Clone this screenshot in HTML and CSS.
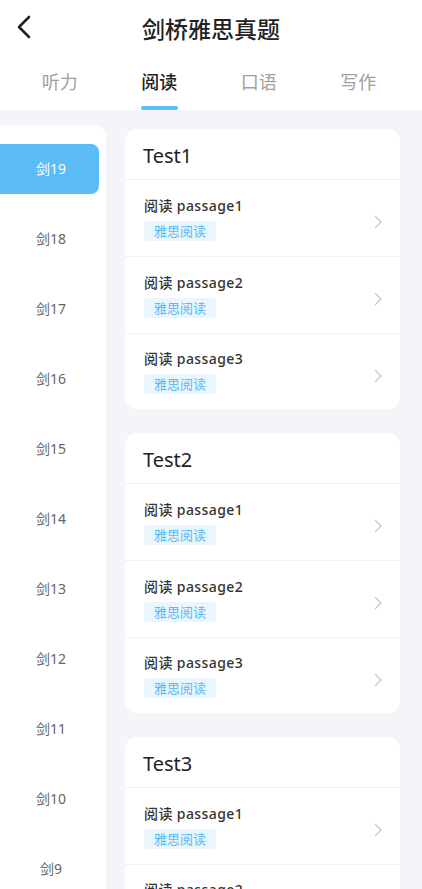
FILE: index.html
```html
<!DOCTYPE html>
<html lang="zh-CN">
<head>
    <meta charset="UTF-8">
    <meta name="viewport" content="width=device-width, initial-scale=1.0">
    <title>剑桥雅思真题</title>
    <link rel="stylesheet" href="styles.css">
</head>
<body>
    <div class="header">
        <div class="navbar">
            <svg class="back" width="16" height="24" viewBox="0 0 16 24">
                <path d="M13 2 L3 12 L13 22" fill="none" stroke="#222" stroke-width="2.6" stroke-linecap="round" stroke-linejoin="round"/>
            </svg>
            <h1>剑桥雅思真题</h1>
        </div>
        <div class="tabs">
            <div class="tab">听力</div>
            <div class="tab active">阅读</div>
            <div class="tab">口语</div>
            <div class="tab">写作</div>
        </div>
    </div>

    <div class="main">
        <div class="sidebar">
            <div class="book active">剑19</div>
            <div class="book">剑18</div>
            <div class="book">剑17</div>
            <div class="book">剑16</div>
            <div class="book">剑15</div>
            <div class="book">剑14</div>
            <div class="book">剑13</div>
            <div class="book">剑12</div>
            <div class="book">剑11</div>
            <div class="book">剑10</div>
            <div class="book">剑9</div>
        </div>

        <div class="list">
            <div class="card">
                <div class="card-title">Test1</div>
                <div class="row">
                    <div>
                        <div class="row-title">阅读 passage1</div>
                        <span class="tag">雅思阅读</span>
                    </div>
                    <svg class="arrow" width="8" height="14" viewBox="0 0 8 14"><path d="M1 1 L7 7 L1 13" fill="none" stroke="#c9c9c9" stroke-width="1.4"/></svg>
                </div>
                <div class="row">
                    <div>
                        <div class="row-title">阅读 passage2</div>
                        <span class="tag">雅思阅读</span>
                    </div>
                    <svg class="arrow" width="8" height="14" viewBox="0 0 8 14"><path d="M1 1 L7 7 L1 13" fill="none" stroke="#c9c9c9" stroke-width="1.4"/></svg>
                </div>
                <div class="row">
                    <div>
                        <div class="row-title">阅读 passage3</div>
                        <span class="tag">雅思阅读</span>
                    </div>
                    <svg class="arrow" width="8" height="14" viewBox="0 0 8 14"><path d="M1 1 L7 7 L1 13" fill="none" stroke="#c9c9c9" stroke-width="1.4"/></svg>
                </div>
            </div>

            <div class="card">
                <div class="card-title">Test2</div>
                <div class="row">
                    <div>
                        <div class="row-title">阅读 passage1</div>
                        <span class="tag">雅思阅读</span>
                    </div>
                    <svg class="arrow" width="8" height="14" viewBox="0 0 8 14"><path d="M1 1 L7 7 L1 13" fill="none" stroke="#c9c9c9" stroke-width="1.4"/></svg>
                </div>
                <div class="row">
                    <div>
                        <div class="row-title">阅读 passage2</div>
                        <span class="tag">雅思阅读</span>
                    </div>
                    <svg class="arrow" width="8" height="14" viewBox="0 0 8 14"><path d="M1 1 L7 7 L1 13" fill="none" stroke="#c9c9c9" stroke-width="1.4"/></svg>
                </div>
                <div class="row">
                    <div>
                        <div class="row-title">阅读 passage3</div>
                        <span class="tag">雅思阅读</span>
                    </div>
                    <svg class="arrow" width="8" height="14" viewBox="0 0 8 14"><path d="M1 1 L7 7 L1 13" fill="none" stroke="#c9c9c9" stroke-width="1.4"/></svg>
                </div>
            </div>

            <div class="card">
                <div class="card-title">Test3</div>
                <div class="row">
                    <div>
                        <div class="row-title">阅读 passage1</div>
                        <span class="tag">雅思阅读</span>
                    </div>
                    <svg class="arrow" width="8" height="14" viewBox="0 0 8 14"><path d="M1 1 L7 7 L1 13" fill="none" stroke="#c9c9c9" stroke-width="1.4"/></svg>
                </div>
                <div class="row">
                    <div>
                        <div class="row-title">阅读 passage2</div>
                        <span class="tag">雅思阅读</span>
                    </div>
                    <svg class="arrow" width="8" height="14" viewBox="0 0 8 14"><path d="M1 1 L7 7 L1 13" fill="none" stroke="#c9c9c9" stroke-width="1.4"/></svg>
                </div>
            </div>
        </div>
    </div>
</body>
</html>
```

FILE: styles.css
```css
html, body {
    height: 100%;
    overflow: hidden;
}
body {
    margin: 0;
    font-family: "Noto Sans", "Noto Sans CJK SC", sans-serif;
    background-color: #f3f5f9;
    color: #222;
}
.header {
    background-color: #fff;
    height: 110px;
}
.navbar {
    position: relative;
    height: 55px;
    display: flex;
    align-items: center;
    justify-content: center;
}
.back {
    position: absolute;
    left: 16px;
    top: 15px;
}
.navbar h1 {
    margin: 0;
    font-size: 23px;
    font-weight: 500;
    color: #222;
}
.tabs {
    display: grid;
    grid-template-columns: repeat(4, 1fr);
    padding: 0 14px 0 10px;
    height: 55px;
}
.tab {
    position: relative;
    text-align: center;
    font-size: 18px;
    line-height: 55px;
    color: #a0a0a0;
}
.tab.active {
    color: #222;
    font-weight: 500;
}
.tab.active::after {
    content: "";
    position: absolute;
    left: 50%;
    bottom: 0;
    width: 37px;
    height: 4px;
    margin-left: -18px;
    border-radius: 2px;
    background-color: #5bbcf7;
}
.main {
    display: flex;
    align-items: flex-start;
}
.sidebar {
    width: 106px;
    margin-top: 15px;
    padding-top: 19px;
    background-color: #fff;
    border-top-right-radius: 12px;
    display: flex;
    flex-direction: column;
    gap: 20px;
}
.book {
    width: 99px;
    height: 50px;
    line-height: 50px;
    padding-left: 3px;
    box-sizing: border-box;
    text-align: center;
    font-size: 14px;
    color: #666;
    border-radius: 0 8px 8px 0;
    flex-shrink: 0;
}
.book.active {
    background-color: #5bbcf7;
    color: #fff;
}
.list {
    flex: 1;
    margin: 19px 22px 0 19px;
    display: flex;
    flex-direction: column;
    gap: 24px;
}
.card {
    background-color: #fff;
    border-radius: 12px;
    overflow: hidden;
}
.card-title {
    height: 50px;
    line-height: 54px;
    padding-left: 18px;
    font-size: 20px;
    color: #222;
    border-bottom: 1px solid #f0f1f3;
}
.row {
    display: flex;
    align-items: center;
    justify-content: space-between;
    padding: 15px 18px 15px 19px;
    height: 46px;
    border-bottom: 1px solid #f0f1f3;
}
.row:last-child {
    height: 45px;
    border-bottom: none;
}
.row-title {
    font-size: 14px;
    line-height: 20px;
    font-weight: 500;
    letter-spacing: 0.4px;
    color: #333;
}
.tag {
    display: inline-block;
    margin-top: 5px;
    padding: 0 10px;
    height: 20px;
    line-height: 20px;
    font-size: 13px;
    color: #5cb8f2;
    background-color: #eaf6fe;
    border-radius: 4px;
}
.arrow {
    margin-top: 8px;
}
```
